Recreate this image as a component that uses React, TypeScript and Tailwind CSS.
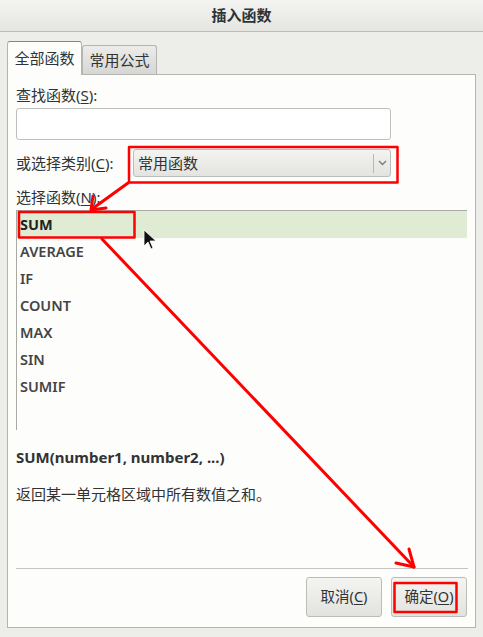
import React from "react";

const font = { fontFamily: '"Noto Sans", "Noto Sans CJK SC", sans-serif' };

const functions = ["SUM", "AVERAGE", "IF", "COUNT", "MAX", "SIN", "SUMIF"];

function U({ children }: { children: React.ReactNode }) {
  return <span className="underline underline-offset-2">{children}</span>;
}

export default function App() {
  return (
    <div
      className="relative w-[483px] h-[637px] overflow-hidden bg-[#edede9] text-[#2e3436] text-[15px]"
      style={font}
    >
      {/* Title bar */}
      <div className="h-[32px] flex items-center justify-center bg-gradient-to-b from-[#f4f4f2] to-[#e5e5e1] border-b border-[#bdbdb8] font-bold text-[15px]">
        插入函数
      </div>

      <div className="pl-[7px] pr-[7px] pt-[8px]">
        {/* Tabs */}
        <div className="flex items-end h-[34px]">
          <div className="h-[34px] w-[75px] flex items-center justify-center bg-[#fdfdfc] border border-b-0 border-[#b4b4b0] border-t-[#4a8fd8] rounded-t-[3px] relative top-[1px] z-10">
            全部函数
          </div>
          <div className="h-[29px] w-[75px] flex items-center justify-center bg-gradient-to-b from-[#ececea] to-[#d6d6d3] border border-b-0 border-[#b4b4b0] rounded-t-[3px]">
            常用公式
          </div>
        </div>

        {/* Panel */}
        <div className="w-[469px] h-[554px] bg-[#fdfdfc] border border-[#b4b4b0] pl-[8px] pr-[7px] pt-[10px]">
          <div className="h-5 leading-5">
            查找函数(<U>S</U>):
          </div>
          <div className="mt-[3px] w-[375px] h-[32px] bg-white border border-[#c0c0bc] rounded-[3px]" />

          <div className="mt-[9px] flex items-center h-[28px]">
            <div className="w-[117px]">
              或选择类别(<U>C</U>):
            </div>
            <div className="w-[258px] h-[28px] flex items-center bg-gradient-to-b from-[#f3f3f1] to-[#e3e3e0] border border-[#bcbcb8] rounded-[3px]">
              <span className="flex-1 pl-[4px]">常用函数</span>
              <div className="w-px h-[19px] bg-[#b8b8b4]" />
              <div className="w-[16px] flex justify-center">
                <svg width="9" height="6" viewBox="0 0 9 6">
                  <path d="M1 1 L4.5 4.5 L8 1" stroke="#7a7a78" strokeWidth="1.4" fill="none" />
                </svg>
              </div>
            </div>
          </div>

          <div className="mt-[10px] h-5 leading-5">
            选择函数(<U>N</U>):
          </div>

          {/* Function list */}
          <div className="mt-[3px] w-[451px] h-[220px] border-t border-l border-[#a9a9a6] bg-[#fdfdfc]">
            {functions.map((f, i) => (
              <div
                key={f}
                className={`h-[27px] flex items-center pl-[3px] ${
                  i === 0 ? "bg-[#dfecd3] font-bold text-[#222]" : "font-semibold text-[#444]"
                } text-[14.5px]`}
              >
                {f}
              </div>
            ))}
          </div>

          <div className="mt-[17px] h-5 leading-5 font-bold text-[15px] text-[#333]">
            SUM(number1, number2, ...)
          </div>
          <div className="mt-[17px] h-5 leading-5 text-[15px] text-[#333]">
            返回某一单元格区域中所有数值之和。
          </div>

          <div className="mt-[64px] w-[452px] h-px bg-[#c4c4c0]" />

          <div className="mt-[8px] flex justify-end gap-[9px] pr-[1px]">
            <button className="w-[76px] h-[40px] bg-gradient-to-b from-[#f4f4f2] to-[#e2e2df] border border-[#bcbcb8] rounded-[3px] text-[14.5px]">
              取消(<U>C</U>)
            </button>
            <button className="w-[76px] h-[40px] bg-gradient-to-b from-[#f4f4f2] to-[#e2e2df] border border-[#bcbcb8] rounded-[3px] text-[14.5px]">
              确定(<U>O</U>)
            </button>
          </div>
        </div>
      </div>

      {/* Annotation overlay */}
      <svg className="absolute inset-0 pointer-events-none" width="483" height="637" viewBox="0 0 483 637">
        <g stroke="#ff0000" strokeWidth="3" fill="none" strokeLinecap="round" strokeLinejoin="round">
          <rect x="129" y="147" width="268.5" height="35.5" strokeWidth="2.5" />
          <rect x="19" y="212" width="115.5" height="25.5" strokeWidth="2.5" />
          <rect x="394.5" y="583" width="62" height="29" strokeWidth="2.5" />
          <path d="M128 183 L92 209" />
          <path d="M93 196 L91 210 L106 208" />
          <path d="M102 239 L414 567" />
          <path d="M409 549 L414 567 L396 563" />
        </g>
        <path d="M144 230 L144 246 L148 242 L151 249 L153 248 L150 241 L156 241 Z" fill="#111" stroke="#fff" strokeWidth="0.8" />
      </svg>
    </div>
  );
}
